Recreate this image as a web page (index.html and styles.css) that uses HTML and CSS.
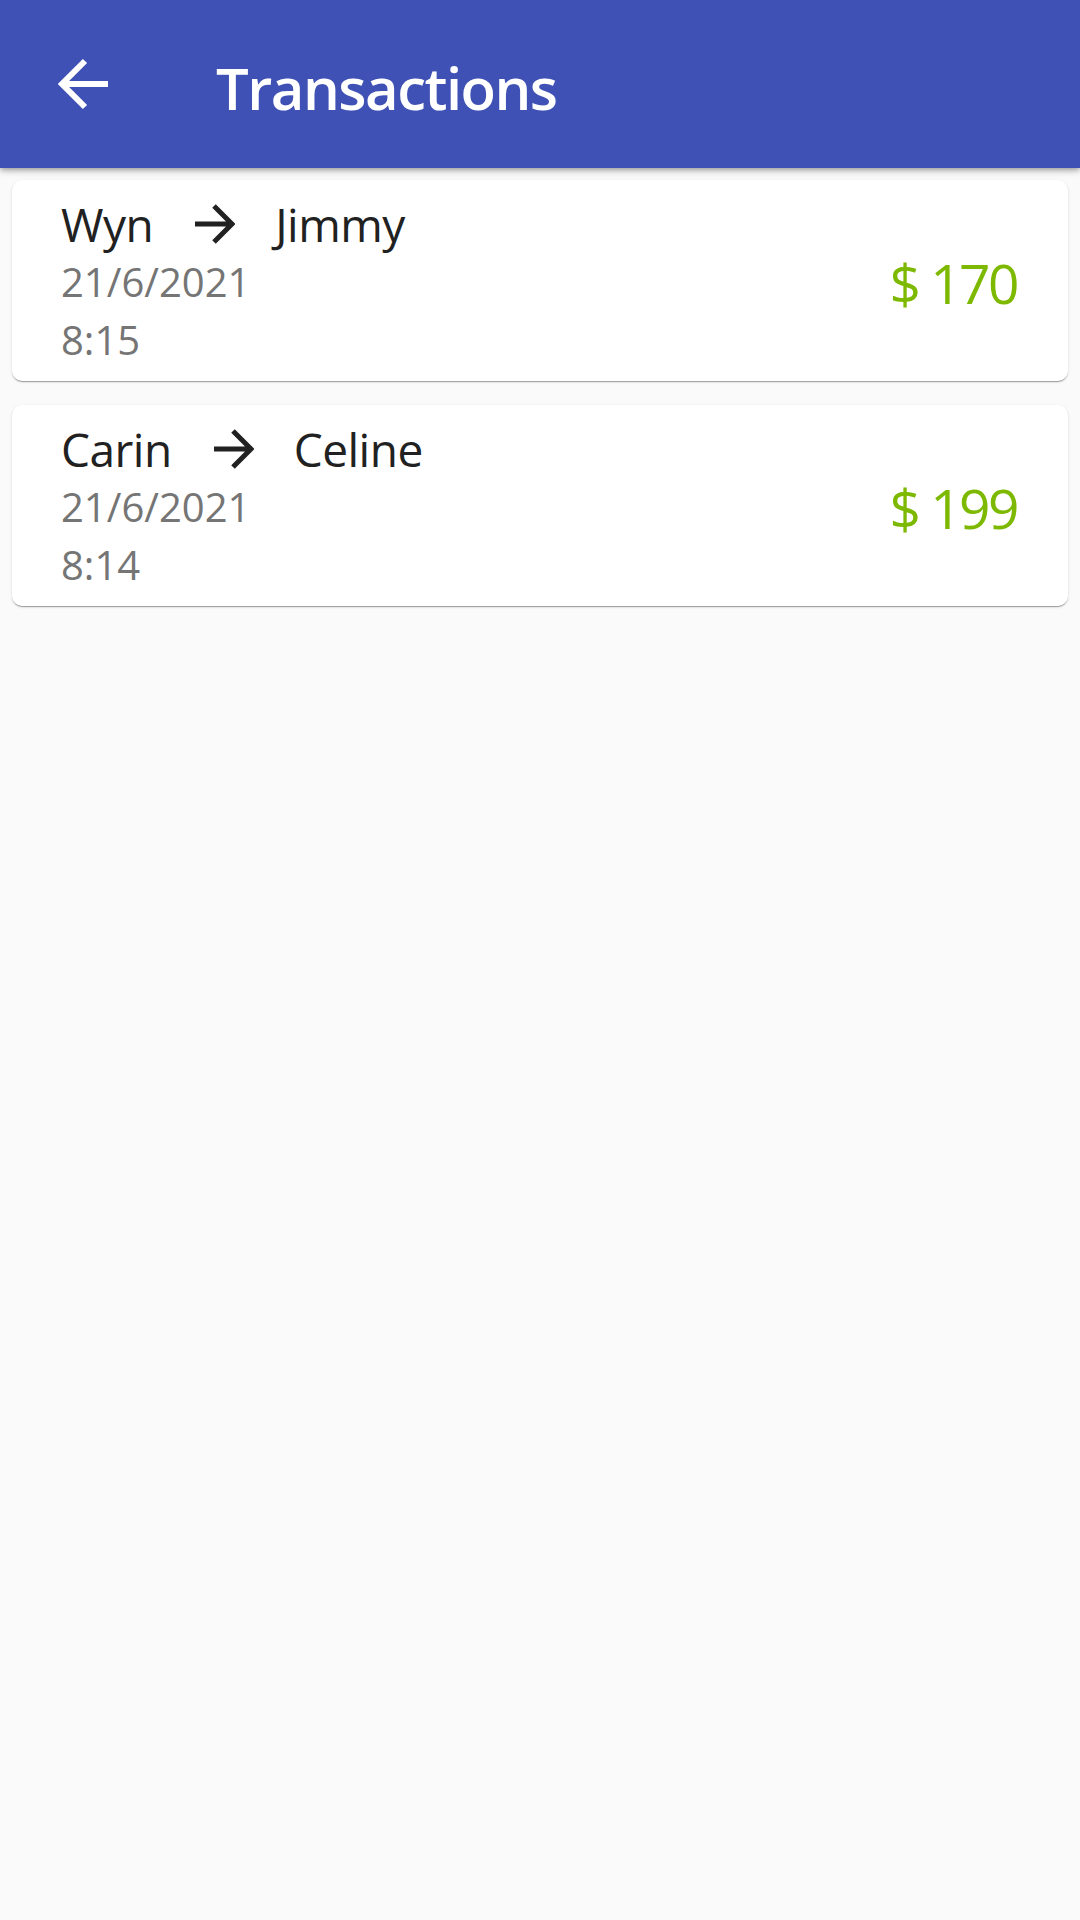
FILE: index.html
```html
<!DOCTYPE html>
<html>
<head>
<meta charset="utf-8">
<link rel="stylesheet" href="styles.css">
</head>
<body>
<header class="appbar">
  <svg class="back" width="56" height="56" viewBox="0 0 56 56">
    <path d="M52 28H6M29 5L6 28L29 51" fill="none" stroke="#fff" stroke-width="6" stroke-linecap="butt" stroke-linejoin="miter"/>
  </svg>
  <h1 class="title">Transactions</h1>
</header>
<main class="list">
  <div class="card">
    <div class="info">
      <div class="names">
        <span>Wyn</span>
        <svg class="fwd" width="40" height="40" viewBox="0 0 40 40">
          <path d="M0 20H37M19 2L37 20L19 38" fill="none" stroke="#212121" stroke-width="5"/>
        </svg>
        <span>Jimmy</span>
      </div>
      <div class="meta">21/6/2021</div>
      <div class="meta">8:15</div>
    </div>
    <div class="amount">$ 170</div>
  </div>
  <div class="card">
    <div class="info">
      <div class="names">
        <span>Carin</span>
        <svg class="fwd" width="40" height="40" viewBox="0 0 40 40">
          <path d="M0 20H37M19 2L37 20L19 38" fill="none" stroke="#212121" stroke-width="5"/>
        </svg>
        <span>Celine</span>
      </div>
      <div class="meta">21/6/2021</div>
      <div class="meta">8:14</div>
    </div>
    <div class="amount">$ 199</div>
  </div>
</main>
</body>
</html>
```
FILE: styles.css
```css
html, body {
  margin: 0;
  padding: 0;
}
body {
  background: #fafafa;
  font-family: "Open Sans", "Noto Sans", "Liberation Sans", sans-serif;
  width: 1080px;
  min-height: 1920px;
}
.appbar {
  height: 168px;
  background: #3f51b5;
  display: flex;
  align-items: center;
  padding-left: 56px;
  box-sizing: border-box;
  box-shadow: 0 2px 4px -1px rgba(0,0,0,.2), 0 4px 5px 0 rgba(0,0,0,.14), 0 1px 10px 0 rgba(0,0,0,.12);
  position: relative;
  z-index: 1;
}
.back {
  display: block;
  flex: none;
}
.title {
  margin: 0 0 0 104px;
  color: #fff;
  font-size: 58px;
  font-weight: 600;
  line-height: 1;
  padding-top: 8px;
  letter-spacing: -1.5px;
}
.list {
  display: flex;
  flex-direction: column;
  gap: 24px;
  padding: 12px;
}
.card {
  background: #fff;
  border-radius: 10px;
  display: flex;
  justify-content: space-between;
  align-items: center;
  padding: 15px 51px 12px 49px;
  box-shadow: 0 2px 1px -1px rgba(0,0,0,.2), 0 1px 1px 0 rgba(0,0,0,.14), 0 1px 3px 0 rgba(0,0,0,.12);
}
.names {
  display: flex;
  align-items: center;
  font-size: 46px;
  line-height: 58px;
  letter-spacing: -0.5px;
  color: #212121;
}
.fwd {
  display: block;
  margin: 0 40px 0 42px;
  flex: none;
}
.meta {
  font-size: 40px;
  line-height: 58px;
  color: #757575;
}
.amount {
  font-size: 55px;
  letter-spacing: -2.5px;
  color: #7cb900;
  line-height: 1;
  padding-top: 0;
}
```
